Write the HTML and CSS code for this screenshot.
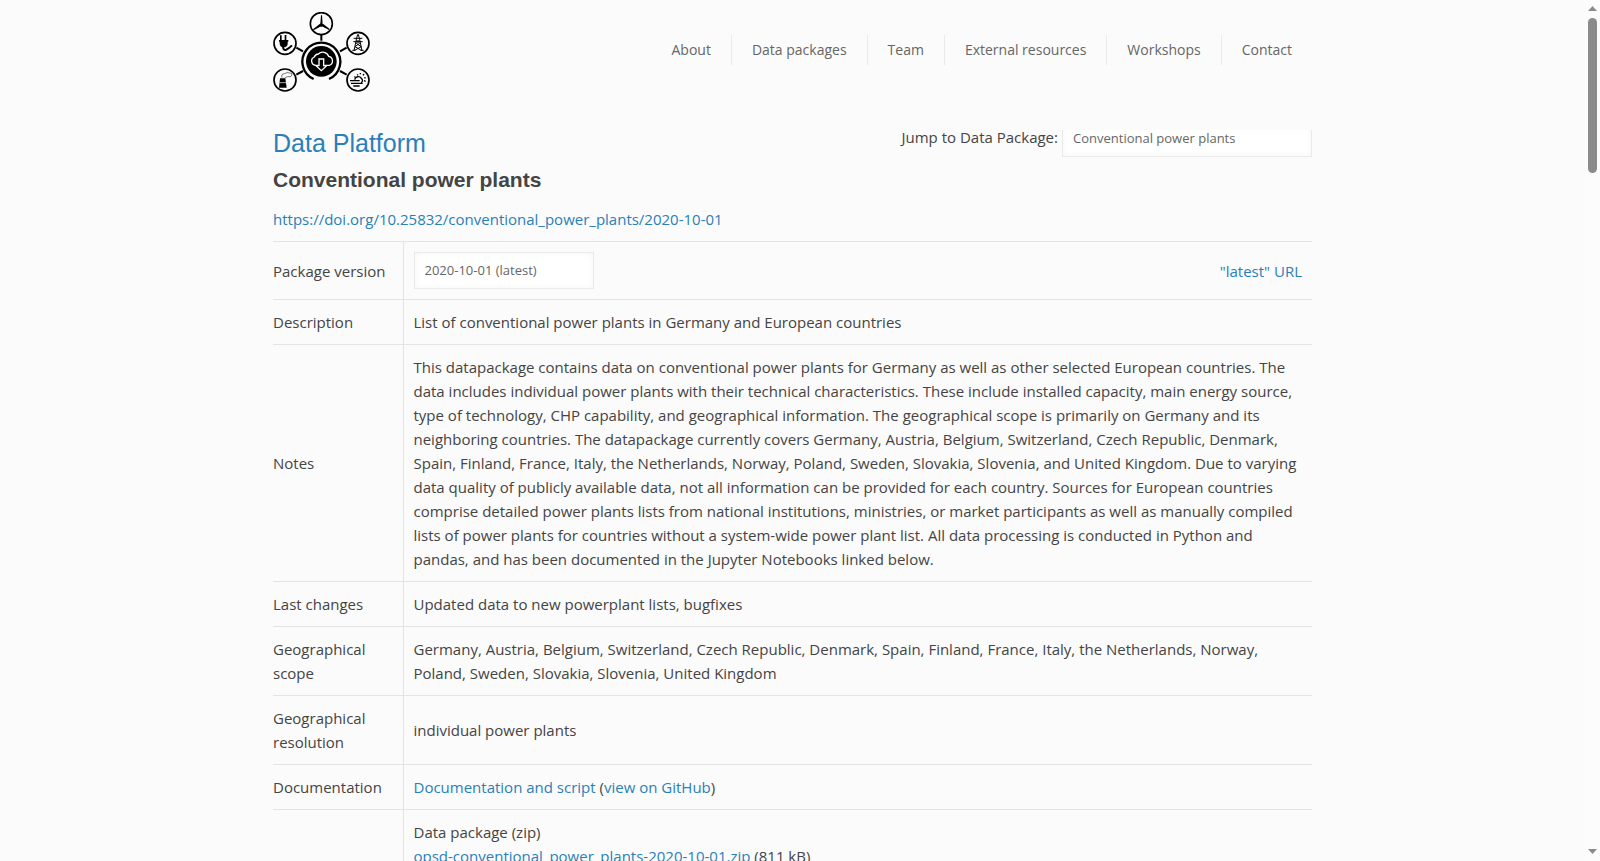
FILE: index.html
```html
<!DOCTYPE html>
<html lang="en">
<head>
<meta charset="utf-8">
<title>Data Platform – Open Power System Data</title>
<link rel="stylesheet" href="styles.css">
</head>
<body>
<header class="site-header">
  <div class="container header-row">
    <a class="logo" href="#" aria-label="Open Power System Data">
      <svg viewBox="33 36 291 240" width="97" height="80" fill="none" stroke="#000" stroke-width="5">
        <path d="M178 104v18M103 143l20 11M254 143l-20 11M103 224l20-11M254 224l-20-11" stroke-width="6"/>
        <circle cx="178" cy="71" r="33"/>
        <circle cx="69" cy="130" r="33"/>
        <circle cx="288" cy="130" r="33"/>
        <circle cx="69" cy="240" r="33"/>
        <circle cx="288" cy="240" r="33"/>
        <path d="M155 237A57 57 0 1 1 201 237" stroke-width="7"/>
        <circle cx="178" cy="184" r="46" fill="#000" stroke="none"/>
        <path d="M168 196h-7a13 13 0 0 1-4-25a14 14 0 0 1 12-9a19 19 0 0 1 31 7a14 14 0 0 1 2 27h-14" stroke="#fff" stroke-width="4"/>
        <path d="M171 177h14v20h9l-16 15-16-15h9z" fill="#000" stroke="#fff" stroke-width="4"/>
        <g fill="#000" stroke="none">
          <path d="M175 73l2-27h3l2 27zM176 70l4 7-25 14-2-3zM181 70l-4 7 24 13 2-3z"/>
          <circle cx="178" cy="75" r="5"/>
          <path d="M54 106h5v14h9v-15h5v15h6v5h-2v7q-1 9-10 10h-4q-9-2-10-11v-6h-2v-5h3z"/>
          <path d="M54 235h16l4 28H51z"/>
        </g>
        <path d="M63 139q1 15 10 10t17-13" stroke-width="6"/>
        <path d="M53 248h20" stroke="#fff" stroke-width="2"/>
        <path d="M60 233q-4-12 8-12q8-6 14-2q9-2 8 6q-1 7-13 5l-9 4" stroke="#333" stroke-width="2"/>
        <path d="M287 103l-4 16-7 33M289 103l4 16 7 33M275 115h26M274 125h28M283 119l10 11-14 10 19 11M293 119l-10 11 15 10-20 11M271 151h9M296 151h9" stroke-width="3"/>
        <path d="M264 242h29M267 250h35M274 258h19M278 239a11 11 0 0 1 20-4q7 7 0 13" stroke-width="4"/>
        <path d="M288 226l-2-3M295 223v-4M303 226l3-4M307 234l4-1M306 242l5 2M280 231l-3-1" stroke-width="4"/>
      </svg>
    </a>
    <nav class="main-nav" aria-label="Main">
      <a href="#">About</a>
      <a href="#">Data packages</a>
      <a href="#">Team</a>
      <a href="#">External resources</a>
      <a href="#">Workshops</a>
      <a href="#">Contact</a>
    </nav>
  </div>
</header>
<main class="container">
  <div class="title-row">
    <h1><a href="#">Data Platform</a></h1>
    <form class="jump">
      <label for="package">Jump to Data Package:</label>
      <select id="package" class="package-select"><option>Conventional power plants</option></select>
    </form>
  </div>
  <h2>Conventional power plants</h2>
  <p class="doi"><a href="#">https://doi.org/10.25832/conventional_power_plants/2020-10-01</a></p>
  <table class="metadata">
    <tbody>
      <tr>
        <th scope="row"><label for="version">Package version</label></th>
        <td><div class="version-row">
          <select id="version" class="version-select"><option>2020-10-01 (latest)</option></select>
          <a href="#">"latest" URL</a>
        </div></td>
      </tr>
      <tr><th scope="row">Description</th><td>List of conventional power plants in Germany and European countries</td></tr>
      <tr><th scope="row">Notes</th><td>This datapackage contains data on conventional power plants for Germany as well as other selected European countries. The data includes individual power plants with their technical characteristics. These include installed capacity, main energy source, type of technology, CHP capability, and geographical information. The geographical scope is primarily on Germany and its neighboring countries. The datapackage currently covers Germany, Austria, Belgium, Switzerland, Czech Republic, Denmark, Spain, Finland, France, Italy, the Netherlands, Norway, Poland, Sweden, Slovakia, Slovenia, and United Kingdom. Due to varying data quality of publicly available data, not all information can be provided for each country. Sources for European countries comprise detailed power plants lists from national institutions, ministries, or market participants as well as manually compiled lists of power plants for countries without a system-wide power plant list. All data processing is conducted in Python and pandas, and has been documented in the Jupyter Notebooks linked below.</td></tr>
      <tr><th scope="row">Last changes</th><td>Updated data to new powerplant lists, bugfixes</td></tr>
      <tr><th scope="row">Geographical scope</th><td>Germany, Austria, Belgium, Switzerland, Czech Republic, Denmark, Spain, Finland, France, Italy, the Netherlands, Norway, Poland, Sweden, Slovakia, Slovenia, United Kingdom</td></tr>
      <tr><th scope="row">Geographical resolution</th><td>individual power plants</td></tr>
      <tr><th scope="row">Documentation</th><td><a href="#">Documentation and script</a> (<a href="#">view on GitHub</a>)</td></tr>
      <tr><th scope="row"></th><td>Data package (zip)<br><a href="#">opsd-conventional_power_plants-2020-10-01.zip</a> (811 kB)</td></tr>
    </tbody>
  </table>
</main>
<div class="scrollbar" aria-hidden="true">
  <svg width="9" height="5" viewBox="0 0 9 5"><path d="M0 5L4.500 0L9 5z"/></svg>
  <div class="scroll-track"><div class="scroll-thumb"></div></div>
  <svg width="9" height="5" viewBox="0 0 9 5"><path d="M0 0h9L4.500 5z"/></svg>
</div>
</body>
</html>
```
FILE: styles.css
```css
* { box-sizing: border-box; }

body {
  height: 100vh;
  margin: 0;
  padding-right: 15px;
  overflow: hidden;
  background: #fbfbfb;
  color: #444;
  font: 15px/24px "Open Sans", "Noto Sans", sans-serif;
}

a { color: #2980b9; text-decoration: none; }

.container { max-width: 1039px; margin: 0 auto; }

/* The header lies above the top edge of the page content. */
.site-header {
  position: relative;
  z-index: 1;
  height: 130px;
  background: #fbfbfb;
}

.header-row {
  display: flex;
  justify-content: space-between;
  align-items: flex-start;
  padding-top: 12px;
}

.logo svg { display: block; }

.main-nav { display: flex; margin-top: 23px; }
.main-nav a {
  padding: 0 20px;
  border-right: 1px solid #eaeaea;
  color: #666;
  font-size: 14px;
  line-height: 30px;
}
.main-nav a:last-child { border-right: 0; }

.title-row {
  display: flex;
  justify-content: space-between;
  align-items: flex-start;
}

h1, h2 {
  margin: 0;
  font-family: "Liberation Sans", Arial, sans-serif;
}
h1 { font-size: 25px; font-weight: 400; line-height: 26px; }
h2 { margin-top: 10px; font-size: 21px; line-height: 28px; }

.jump {
  display: flex;
  align-items: flex-start;
  gap: 4px;
  margin: -10px 0 -20px;
  line-height: 35px;
}

select {
  height: 37px;
  padding: 0 10px 2px;
  appearance: none;
  border: 1px solid #eaeaea;
  border-radius: 0;
  background: #fff;
  box-shadow: inset 0 0 6px #f5f5f5;
  color: #666;
  font: 13px/18px "Open Sans", "Noto Sans", sans-serif;
}
.package-select { width: 250px; }
.version-select { width: 180px; }

.doi { margin: 13px 0 10px; }

.metadata { width: 100%; border-collapse: collapse; }
.metadata th, .metadata td {
  padding: 10px;
  border-top: 1px solid #e4e4e4;
  text-align: left;
  vertical-align: middle;
}
.metadata th {
  width: 130px;
  padding-left: 0;
  border-right: 1px solid #e4e4e4;
  font-weight: 400;
}

.version-row {
  display: flex;
  justify-content: space-between;
  align-items: center;
}

.scrollbar {
  position: fixed;
  top: 0;
  right: 0;
  bottom: 0;
  display: flex;
  flex-direction: column;
  align-items: center;
  width: 15px;
  padding: 6px 0 7px;
  background: #fcfcfc;
}
.scrollbar path { fill: #8b8b8b; }
.scroll-track { flex: 1; padding: 7px 0; }
.scroll-thumb {
  width: 9px;
  height: 155px;
  border-radius: 5px;
  background: #8b8b8b;
}
```
